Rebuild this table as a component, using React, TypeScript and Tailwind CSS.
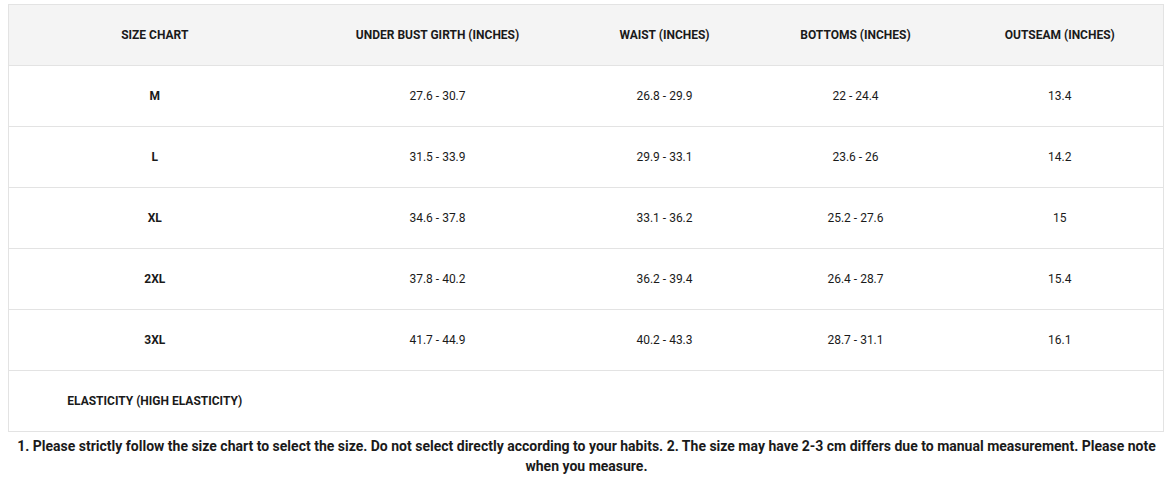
const HEAD = [
  "SIZE CHART",
  "UNDER BUST GIRTH (INCHES)",
  "WAIST (INCHES)",
  "BOTTOMS (INCHES)",
  "OUTSEAM (INCHES)",
];

const ROWS: string[][] = [
  ["M", "27.6 - 30.7", "26.8 - 29.9", "22 - 24.4", "13.4"],
  ["L", "31.5 - 33.9", "29.9 - 33.1", "23.6 - 26", "14.2"],
  ["XL", "34.6 - 37.8", "33.1 - 36.2", "25.2 - 27.6", "15"],
  ["2XL", "37.8 - 40.2", "36.2 - 39.4", "26.4 - 28.7", "15.4"],
  ["3XL", "41.7 - 44.9", "40.2 - 43.3", "28.7 - 31.1", "16.1"],
];

const WIDTHS = ["w-[292px]", "w-[274px]", "w-[180px]", "w-[202px]", "w-[207px]"];

export default function App() {
  return (
    <div className="min-h-[481px] bg-white pt-1 font-['Roboto','Liberation_Sans',sans-serif] text-[#1a1a1a]">
      <table className="ml-2 w-[1155px] table-fixed border-collapse border border-[#e3e3e3] text-[12px]">
        <thead>
          <tr className="h-[61px] bg-[#f4f4f4]">
            {HEAD.map((h, i) => (
              <th key={h} className={`${WIDTHS[i]} border-y border-[#e3e3e3] text-center font-bold`}>
                {h}
              </th>
            ))}
          </tr>
        </thead>
        <tbody>
          {ROWS.map((r) => (
            <tr key={r[0]} className="h-[61px]">
              {r.map((c, i) => (
                <td
                  key={i}
                  className={`border-y border-[#e3e3e3] text-center ${i === 0 ? "font-bold" : ""}`}
                >
                  {c}
                </td>
              ))}
            </tr>
          ))}
          <tr className="h-[61px]">
            <td className="border-y border-[#e3e3e3] text-center font-bold">
              ELASTICITY (HIGH ELASTICITY)
            </td>
            <td colSpan={4} />
          </tr>
        </tbody>
      </table>
      <p className="mx-2 mt-1 text-center text-[14px] font-bold leading-5">
        1. Please strictly follow the size chart to select the size. Do not select directly
        according to your habits. 2. The size may have 2-3 cm differs due to manual
        measurement. Please note when you measure.
      </p>
    </div>
  );
}
